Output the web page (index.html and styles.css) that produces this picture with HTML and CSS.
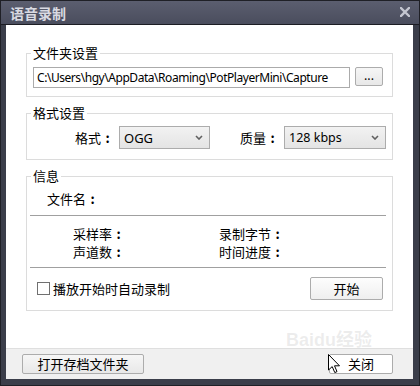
FILE: index.html
```html
<!DOCTYPE html>
<html lang="zh-CN">
<head>
  <meta charset="UTF-8">
  <title>语音录制</title>
  <link rel="stylesheet" href="styles.css">
</head>
<body>

<div class="window">
  <!-- タイトルバー -->
  <div class="titlebar">
    <span class="title">语音录制</span>
    <svg class="close" width="10" height="10" viewBox="0 0 10 10">
      <path d="M1 1 L9 9 M9 1 L1 9" stroke="#c3c5cf" stroke-width="2.4" stroke-linecap="square"/>
    </svg>
  </div>

  <div class="client">
    <div class="content">
      <!-- 文件夹设置 -->
      <fieldset class="group">
        <legend>文件夹设置</legend>
        <div class="folder-row">
          <div class="path-input">C:\Users\hgy\AppData\Roaming\PotPlayerMini\Capture</div>
          <div class="btn btn-browse">...</div>
        </div>
      </fieldset>

      <!-- 格式设置 -->
      <fieldset class="group group-format">
        <legend>格式设置</legend>
        <div class="format-row">
          <span class="format-label">格式<span class="colon">:</span></span>
          <div class="select select-format">
            <span>OGG</span>
            <svg width="8" height="5" viewBox="0 0 8 5"><path d="M1 1 L4 4 L7 1" stroke="#606060" stroke-width="1.6" fill="none"/></svg>
          </div>
          <span class="format-label quality-label">质量<span class="colon">:</span></span>
          <div class="select select-quality">
            <span>128 kbps</span>
            <svg width="8" height="5" viewBox="0 0 8 5"><path d="M1 1 L4 4 L7 1" stroke="#606060" stroke-width="1.6" fill="none"/></svg>
          </div>
        </div>
      </fieldset>

      <!-- 信息 -->
      <fieldset class="group group-info">
        <legend>信息</legend>
        <div class="file-name">文件名<span class="colon">:</span></div>
        <div class="separator"></div>
        <div class="info-grid">
          <span>采样率<span class="colon">:</span></span><span>录制字节<span class="colon">:</span></span>
          <span>声道数<span class="colon">:</span></span><span>时间进度<span class="colon">:</span></span>
        </div>
        <div class="separator"></div>
        <div class="record-row">
          <label class="auto-record"><span class="checkbox"></span>播放开始时自动录制</label>
          <div class="btn btn-start">开始</div>
        </div>
      </fieldset>
    </div>

    <!-- 下部ボタン -->
    <div class="footer">
      <div class="btn btn-open">打开存档文件夹</div>
      <div class="btn btn-close">关闭</div>
    </div>
  </div>

  <!-- 透かしとマウスカーソル -->
  <div class="watermark">Baidu经验</div>
  <svg class="cursor" width="13" height="20" viewBox="0 0 13 20">
    <path d="M0.5 0.5 L0.5 16 L4.2 12.6 L6.8 18.6 L9 17.6 L6.5 11.8 L11.5 11.8 Z" fill="#fff" stroke="#000" stroke-width="1"/>
  </svg>
</div>

</body>
</html>
```

FILE: styles.css
```css
/* 全体 */
body {
  margin: 0;
  background: #fff;
  font-family: "Noto Sans", "Noto Sans CJK SC", sans-serif;
  font-size: 13px;
  color: #000;
}

/* ウィンドウ枠 */
.window {
  position: relative;
  width: 420px;
  height: 386px;
  box-sizing: border-box;
  display: flex;
  flex-direction: column;
  padding: 0 6px 6px 5px;
  background-color: #3b3e4a;
  border: 1px solid #1f2026;
}

/* タイトルバー */
.titlebar {
  height: 23px;
  margin: 0 -6px 0 -5px;
  padding: 0 9px 0 9px;
  display: flex;
  align-items: center;
  justify-content: space-between;
  background: linear-gradient(#5b5e6f, #4a4d5d);
  border-bottom: 1px solid #1c1d23;
}
.title {
  font-family: "Noto Sans CJK SC", sans-serif;
  font-weight: bold;
  font-size: 14px;
  color: #d9dae2;
  line-height: 16px;
}
.close {
  margin-top: -1px;
}

/* クライアント領域 */
.client {
  flex: 1;
  display: flex;
  flex-direction: column;
  background-color: #fff;
}
.content {
  padding: 20px 20px 0 20px;
}

/* グループボックス */
.group {
  margin: 0 0 8px 0;
  padding: 0 6px 8px 6px;
  border: 1px solid #dcdcdc;
}
.group legend {
  padding: 0 2px;
  margin-left: -2px;
  line-height: 16px;
  font-family: "Noto Sans CJK SC", sans-serif;
}

/* 全角コロン風（全角幅の中央に表示） */
.colon {
  display: inline-block;
  width: 1em;
  text-align: center;
  font-weight: bold;
}

/* 文件夹设置 */
.folder-row {
  display: flex;
  align-items: flex-start;
  gap: 5px;
  margin-top: 6px;
}
.path-input {
  width: 317px;
  height: 21px;
  box-sizing: border-box;
  border: 1px solid #ababab;
  padding-left: 3px;
  font-size: 12px;
  line-height: 19px;
  white-space: nowrap;
  overflow: hidden;
  letter-spacing: -0.45px;
}

/* ボタン共通 */
.btn {
  box-sizing: border-box;
  border: 1px solid #acacac;
  border-radius: 2px;
  background: linear-gradient(#f6f6f6, #e8e8e8);
  text-align: center;
  font-family: "Noto Sans CJK SC", sans-serif;
}
.btn-browse {
  width: 28px;
  height: 19px;
  font-size: 12px;
  line-height: 14px;
}

/* 格式设置 */
.group-format {
  padding-bottom: 10px;
}
.format-row {
  display: flex;
  align-items: center;
  margin-top: 5px;
  padding-left: 42px;
}
.format-label {
  width: 44px;
  font-family: "Noto Sans CJK SC", sans-serif;
}
.quality-label {
  margin-left: 30px;
}
.select {
  height: 23px;
  box-sizing: border-box;
  display: flex;
  align-items: center;
  justify-content: space-between;
  padding: 0 6px 0 4px;
  border: 1px solid #acacac;
  background: linear-gradient(#f2f2f2, #e4e4e4);
  font-size: 13px;
}
.select-format {
  width: 91px;
}
.select-quality {
  width: 102px;
  font-size: 12.5px;
}

/* 信息 */
.group-info {
  padding-bottom: 10px;
}
.file-name {
  margin-top: 7px;
  margin-left: 14px;
  line-height: 16px;
  font-family: "Noto Sans CJK SC", sans-serif;
}
.separator {
  height: 1px;
  margin: 8px 0 0 -3px;
  background-color: #a0a0a0;
}
.info-grid {
  display: grid;
  grid-template-columns: 146px auto;
  margin-top: 9px;
  margin-bottom: 6px;
  padding-left: 40px;
  line-height: 18px;
  font-family: "Noto Sans CJK SC", sans-serif;
}
.info-grid + .separator {
  margin-top: 0;
}
.record-row {
  display: flex;
  align-items: center;
  justify-content: space-between;
  margin-top: 9px;
}
.auto-record {
  display: flex;
  align-items: center;
  gap: 3px;
  margin-left: 4px;
  font-family: "Noto Sans CJK SC", sans-serif;
}
.checkbox {
  width: 13px;
  height: 13px;
  box-sizing: border-box;
  border: 1px solid #707070;
  background-color: #fff;
}
.btn-start {
  width: 73px;
  height: 23px;
  margin-right: 3px;
  line-height: 21px;
  background: linear-gradient(#fdfdfd, #efefef);
}

/* 下部 */
.footer {
  margin-top: auto;
  height: 31px;
  box-sizing: border-box;
  display: flex;
  justify-content: space-between;
  align-items: flex-start;
  padding: 5px 20px 0 16px;
  border-top: 1px solid #dfdfdf;
  background-color: #f0f0f0;
}
.btn-open {
  width: 122px;
  height: 20px;
  line-height: 18px;
}
.btn-close {
  width: 64px;
  height: 20px;
  line-height: 18px;
  background: #fff;
}

/* 透かし・カーソル（重ね表示） */
.watermark {
  position: absolute;
  left: 285px;
  top: 330px;
  font-family: "Liberation Sans", "Noto Sans CJK SC", sans-serif;
  font-size: 18px;
  font-weight: bold;
  line-height: 18px;
  color: rgba(170, 170, 170, 0.22);
  pointer-events: none;
}
.cursor {
  position: absolute;
  left: 327px;
  top: 353px;
}
```
